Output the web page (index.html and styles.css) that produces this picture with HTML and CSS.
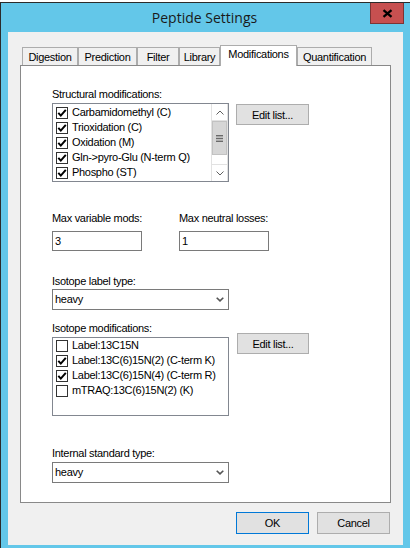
FILE: index.html
```html
<!DOCTYPE html>
<html>
<head>
<meta charset="utf-8">
<title>Peptide Settings</title>
<link rel="stylesheet" href="styles.css">
</head>
<body>
<div class="window">
  <div class="titlebar">
    <div class="title">Peptide Settings</div>
    <div class="close"><svg width="11" height="9" viewBox="0 0 11 9"><path d="M1.5 1.2 L9.5 7.8 M9.5 1.2 L1.5 7.8" stroke="#000" stroke-width="2.3" stroke-linecap="butt" fill="none"/></svg></div>
  </div>
  <div class="client">
    <div class="tabs">
      <div class="tab tab-digestion">Digestion</div>
      <div class="tab tab-prediction">Prediction</div>
      <div class="tab tab-filter">Filter</div>
      <div class="tab tab-library">Library</div>
      <div class="tab tab-modifications active">Modifications</div>
      <div class="tab tab-quantification">Quantification</div>
    </div>
    <div class="panel">
      <div class="row row-struct">
        <div class="col">
          <div class="label">Structural modifications:</div>
          <div class="listbox list-struct">
            <div class="items">
              <div class="item"><span class="cb"><svg width="10" height="10" viewBox="0 0 10 10"><path d="M1.3 4.8 L3.8 7.6 L8.8 1.8" stroke="#000" stroke-width="2" fill="none"/></svg></span><span>Carbamidomethyl (C)</span></div>
              <div class="item"><span class="cb"><svg width="10" height="10" viewBox="0 0 10 10"><path d="M1.3 4.8 L3.8 7.6 L8.8 1.8" stroke="#000" stroke-width="2" fill="none"/></svg></span><span>Trioxidation (C)</span></div>
              <div class="item"><span class="cb"><svg width="10" height="10" viewBox="0 0 10 10"><path d="M1.3 4.8 L3.8 7.6 L8.8 1.8" stroke="#000" stroke-width="2" fill="none"/></svg></span><span>Oxidation (M)</span></div>
              <div class="item"><span class="cb"><svg width="10" height="10" viewBox="0 0 10 10"><path d="M1.3 4.8 L3.8 7.6 L8.8 1.8" stroke="#000" stroke-width="2" fill="none"/></svg></span><span>Gln-&gt;pyro-Glu (N-term Q)</span></div>
              <div class="item"><span class="cb"><svg width="10" height="10" viewBox="0 0 10 10"><path d="M1.3 4.8 L3.8 7.6 L8.8 1.8" stroke="#000" stroke-width="2" fill="none"/></svg></span><span>Phospho (ST)</span></div>
            </div>
            <div class="scrollbar">
              <div class="sb-btn sb-up"><svg width="8" height="5" viewBox="0 0 8 5"><path d="M0.5 4.5 L4 1 L7.5 4.5" stroke="#606060" stroke-width="1" fill="none"/></svg></div>
              <div class="sb-thumb"><svg width="7" height="7" viewBox="0 0 7 7"><rect x="0" y="0" width="7" height="1.4" fill="#6a6a6a"/><rect x="0" y="2.8" width="7" height="1.4" fill="#6a6a6a"/><rect x="0" y="5.6" width="7" height="1.4" fill="#6a6a6a"/></svg></div>
              <div class="sb-track"></div>
              <div class="sb-btn sb-down"><svg width="8" height="5" viewBox="0 0 8 5"><path d="M0.5 0.5 L4 4 L7.5 0.5" stroke="#606060" stroke-width="1" fill="none"/></svg></div>
            </div>
          </div>
        </div>
        <div class="btn btn-edit1">Edit list...</div>
      </div>

      <div class="fields">
        <div class="field">
          <div class="label">Max variable mods:</div>
          <div class="textbox">3</div>
        </div>
        <div class="field">
          <div class="label">Max neutral losses:</div>
          <div class="textbox">1</div>
        </div>
      </div>

      <div class="section sec-labeltype">
        <div class="label">Isotope label type:</div>
        <div class="combo"><span>heavy</span><svg width="8" height="5" viewBox="0 0 8 5"><path d="M0.7 0.7 L4 3.9 L7.3 0.7" stroke="#555" stroke-width="1.6" fill="none"/></svg></div>
      </div>

      <div class="row row-iso">
        <div class="col">
          <div class="label">Isotope modifications:</div>
          <div class="listbox list-iso">
            <div class="items">
              <div class="item item-iso"><span class="cb"></span><span>Label:13C15N</span></div>
              <div class="item item-iso"><span class="cb"><svg width="10" height="10" viewBox="0 0 10 10"><path d="M1.3 4.8 L3.8 7.6 L8.8 1.8" stroke="#000" stroke-width="2" fill="none"/></svg></span><span>Label:13C(6)15N(2) (C-term K)</span></div>
              <div class="item item-iso"><span class="cb"><svg width="10" height="10" viewBox="0 0 10 10"><path d="M1.3 4.8 L3.8 7.6 L8.8 1.8" stroke="#000" stroke-width="2" fill="none"/></svg></span><span>Label:13C(6)15N(4) (C-term R)</span></div>
              <div class="item item-iso"><span class="cb"></span><span>mTRAQ:13C(6)15N(2) (K)</span></div>
            </div>
          </div>
        </div>
        <div class="btn btn-edit2">Edit list...</div>
      </div>

      <div class="section sec-internal">
        <div class="label">Internal standard type:</div>
        <div class="combo"><span>heavy</span><svg width="8" height="5" viewBox="0 0 8 5"><path d="M0.7 0.7 L4 3.9 L7.3 0.7" stroke="#555" stroke-width="1.6" fill="none"/></svg></div>
      </div>
    </div>
    <div class="footer">
      <div class="btn btn-ok">OK</div>
      <div class="btn">Cancel</div>
    </div>
  </div>
</div>
</body>
</html>
```
FILE: styles.css
```css
* { box-sizing: border-box; }
html, body { margin: 0; padding: 0; }
body {
  width: 410px;
  height: 548px;
  overflow: hidden;
  background: #ffffff;
  font-family: "Liberation Sans", Arial, sans-serif;
  font-size: 11px;
  letter-spacing: -0.3px;
  color: #000;
}
.window {
  margin-top: 2px;
  height: 546px;
  border-top: 1px solid #2b2b2b;
  border-left: 1px solid #2b2b2b;
  background: #63c7e9;
  display: flex;
  flex-direction: column;
}
.titlebar {
  position: relative;
  height: 29px;
  flex: none;
}
.title {
  font-family: "Open Sans", "Noto Sans", sans-serif;
  font-size: 14px;
  letter-spacing: 0;
  color: #1a1a1a;
  text-align: center;
  line-height: 29px;
  padding-right: 2px;
}
.close {
  position: absolute;
  top: 0;
  right: 6px;
  width: 34px;
  height: 21px;
  background: #c75050;
  border: 1px solid #7d3434;
  border-top: none;
  display: flex;
  align-items: center;
  justify-content: center;
  padding-top: 1px;
}
.client {
  flex: 1;
  margin: 0 7px 3px 7px;
  background: #f0f0f0;
  padding: 13px 12px 11px 12px;
  display: flex;
  flex-direction: column;
}
.tabs {
  display: flex;
  align-items: flex-end;
  height: 20px;
  padding-left: 2px;
  position: relative;
  z-index: 1;
  flex: none;
}
.tab {
  height: 18px;
  border: 1px solid #acacac;
  border-bottom: none;
  background: #f0f0f0;
  text-align: center;
  line-height: 13px;
  padding-top: 3px;
  white-space: nowrap;
}
.tab + .tab { border-left-color: #acacac; }
.tab.active {
  height: 21px;
  margin-bottom: -1px;
  background: #ffffff;
  padding-top: 2px;
}
.tab-digestion { width: 56px; }
.tab-prediction { width: 59px; }
.tab-filter { width: 42px; }
.tab-library { width: 41px; }
.tab-modifications { width: 77px; }
.tab-quantification { width: 75px; }

.panel {
  height: 438px;
  flex: none;
  border: 1px solid #898989;
  background: #ffffff;
  padding: 22px 0 0 31px;
}
.label {
  line-height: 13px;
  height: 13px;
  white-space: nowrap;
}
.row {
  display: flex;
  align-items: flex-start;
  gap: 7px;
}
.col {
  display: flex;
  flex-direction: column;
}
.listbox {
  width: 177px;
  height: 79px;
  border: 1px solid #828790;
  background: #fff;
  display: flex;
}
.list-struct { margin-top: 2px; }
.list-iso { margin-top: 2px; }
.items {
  flex: 1;
  padding-top: 1px;
}
.list-iso .items { padding-top: 0; }
.item {
  height: 15px;
  line-height: 15px;
  display: flex;
  align-items: center;
  gap: 4px;
  padding-left: 3px;
  white-space: nowrap;
}
.cb {
  width: 12px;
  height: 12px;
  border: 1px solid #333333;
  background: #fff;
  display: flex;
  align-items: center;
  justify-content: center;
  flex: none;
}
.scrollbar {
  width: 17px;
  display: flex;
  flex-direction: column;
  background: #ffffff;
  border-left: 1px solid #e2e2e2;
  border-right: 1px solid #e2e2e2;
}
.sb-btn {
  height: 17px;
  display: flex;
  align-items: center;
  justify-content: center;
}
.sb-up { border-bottom: 1px solid #e2e2e2; }
.sb-down { border-top: 1px solid #e2e2e2; }
.sb-thumb {
  height: 34px;
  background: #d6d6d6;
  border: 1px solid #c2c2c2;
  display: flex;
  align-items: center;
  justify-content: center;
}
.sb-track { height: 9px; }

.btn {
  width: 73px;
  height: 21px;
  background: #e1e1e1;
  border: 1px solid #adadad;
  display: flex;
  align-items: center;
  justify-content: center;
  white-space: nowrap;
}
.btn-edit1 { margin-top: 16px; }
.btn-edit2 { margin-top: 11px; margin-left: 1px; width: 72px; }

.fields {
  display: flex;
  margin-top: 30px;
}
.field { width: 127px; }
.textbox {
  margin-top: 6px;
  width: 90px;
  height: 20px;
  border: 1px solid #7a7a7a;
  background: #fff;
  padding-left: 2px;
  line-height: 18px;
}
.sec-labeltype { margin-top: 24px; }
.sec-labeltype .combo { margin-top: 1px; }
.row-iso { margin-top: 12px; }
.sec-internal { margin-top: 31px; }
.sec-internal .combo { margin-top: 2px; }
.combo {
  width: 177px;
  height: 21px;
  border: 1px solid #7a7a7a;
  background: #fff;
  display: flex;
  align-items: center;
  justify-content: space-between;
  padding: 0 4px 0 2px;
  line-height: 19px;
}
.footer {
  margin-top: 9px;
  display: flex;
  justify-content: flex-end;
  gap: 8px;
  padding-right: 1px;
}
.footer .btn { height: 22px; }
.btn-ok { border-color: #0078d7; }
```
